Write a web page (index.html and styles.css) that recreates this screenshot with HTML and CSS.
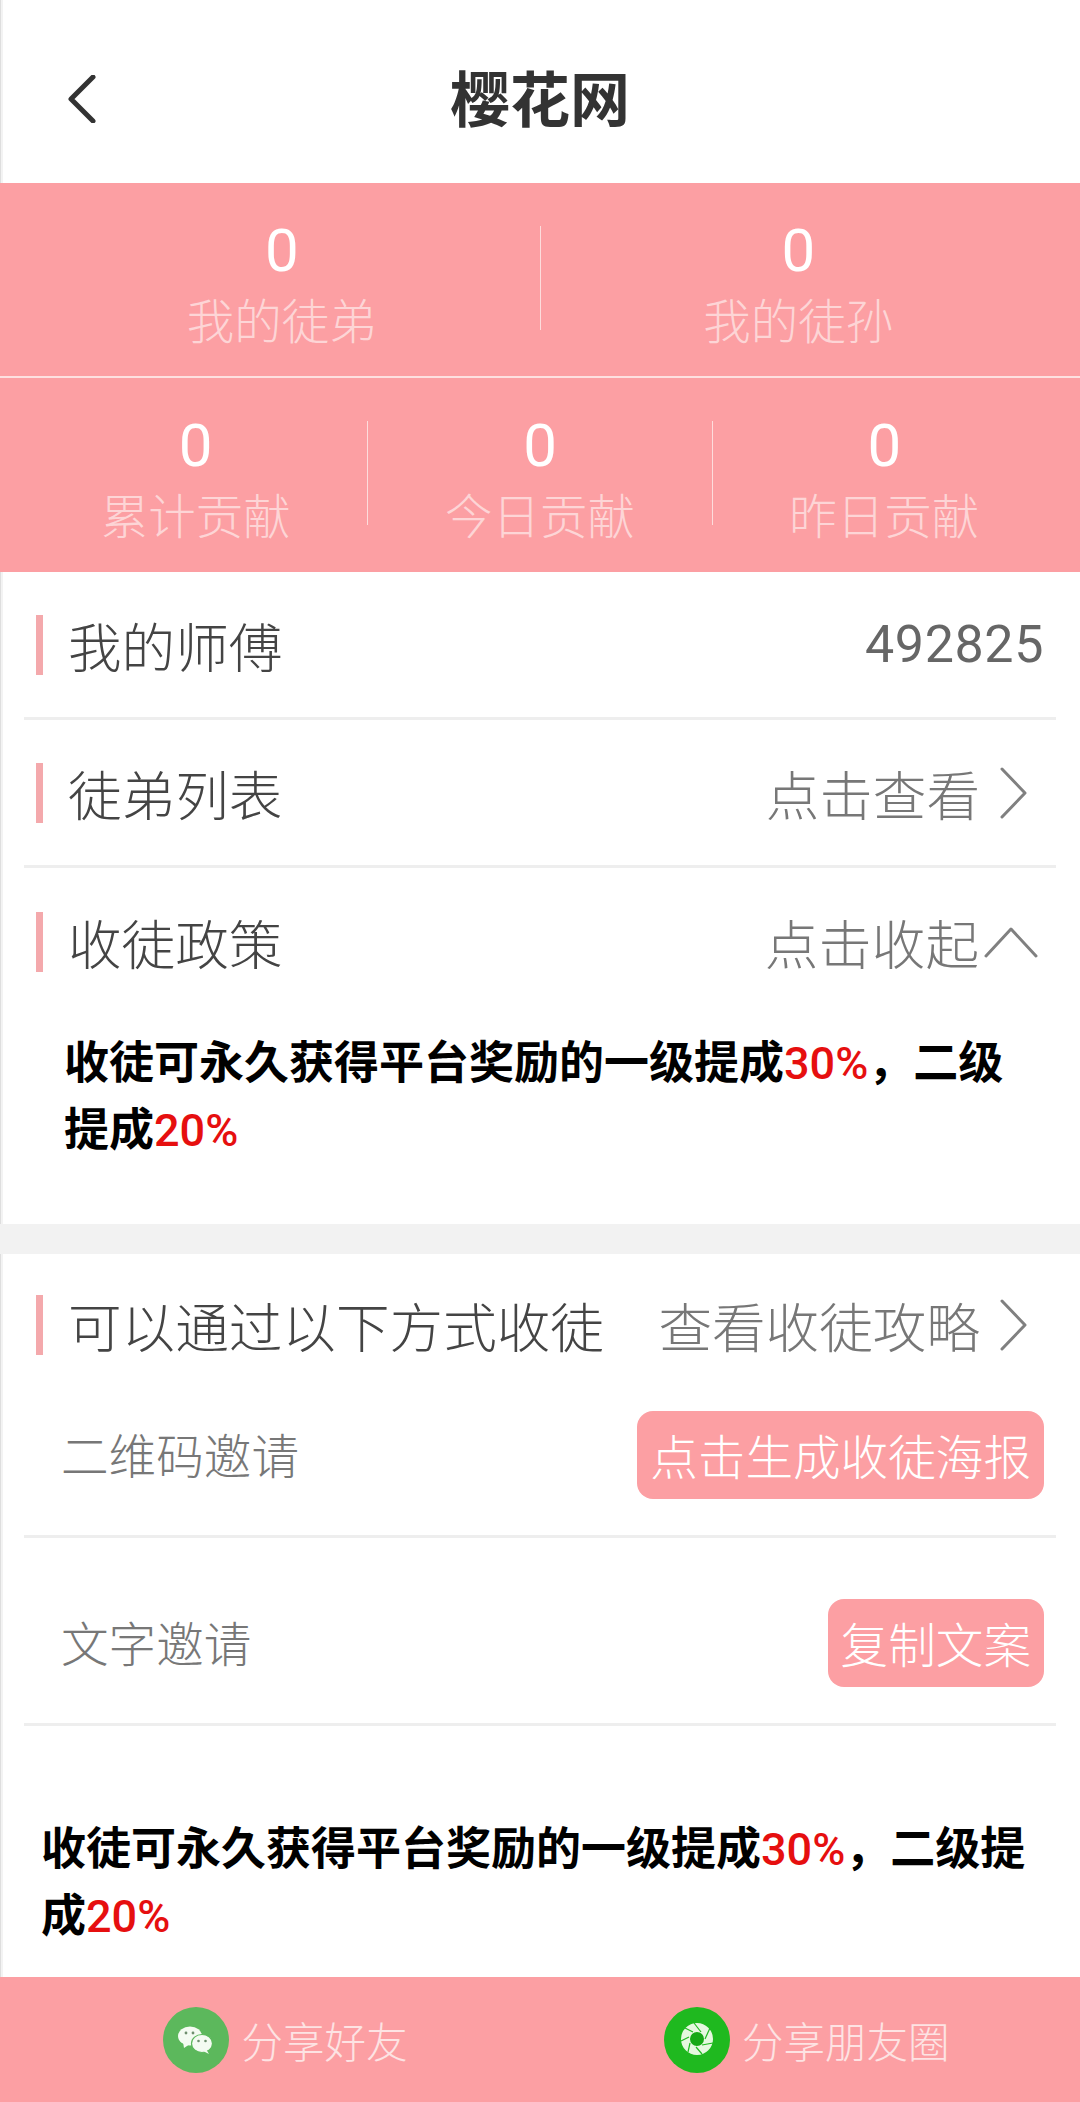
FILE: index.html
```html
<!DOCTYPE html>
<html lang="zh-CN">
<head>
<meta charset="utf-8">
<title>樱花网</title>
<link rel="stylesheet" href="styles.css">
</head>
<body>
<div class="page">
  <header class="topbar">
    <svg class="back" width="28" height="48" viewBox="0 0 28 48"><path d="M25 2 L3 24 L25 46"/></svg>
    <h1 class="title">樱花网</h1>
  </header>

  <section class="stats">
    <div class="stat-row stat-row-first">
      <div class="stat"><div class="stat-num">0</div><div class="stat-label">我的徒弟</div></div>
      <div class="stat-div"></div>
      <div class="stat"><div class="stat-num">0</div><div class="stat-label">我的徒孙</div></div>
    </div>
    <div class="stat-row stat-row-second">
      <div class="stat"><div class="stat-num">0</div><div class="stat-label">累计贡献</div></div>
      <div class="stat-div"></div>
      <div class="stat"><div class="stat-num">0</div><div class="stat-label">今日贡献</div></div>
      <div class="stat-div"></div>
      <div class="stat"><div class="stat-num">0</div><div class="stat-label">昨日贡献</div></div>
    </div>
  </section>

  <section class="panel">
    <div class="row row-line">
      <div class="row-title">我的师傅</div>
      <div class="row-value">492825</div>
    </div>
    <div class="row row-line">
      <div class="row-title">徒弟列表</div>
      <div class="row-link">点击查看<svg class="chev" width="27" height="52" viewBox="0 0 27 52"><path d="M2 2 L25 26 L2 50"/></svg></div>
    </div>
    <div class="row">
      <div class="row-title">收徒政策</div>
      <div class="row-link">点击收起<svg class="chev-up" width="54" height="32" viewBox="0 0 54 32"><path d="M2 30 L27 3 L52 30"/></svg></div>
    </div>
    <p class="policy policy-a">收徒可永久获得平台奖励的一级提成<em>30%</em>，二级提成<em>20%</em></p>
  </section>

  <div class="band"></div>

  <section class="panel">
    <div class="row row-how">
      <div class="row-title">可以通过以下方式收徒</div>
      <div class="row-link">查看收徒攻略<svg class="chev" width="27" height="52" viewBox="0 0 27 52"><path d="M2 2 L25 26 L2 50"/></svg></div>
    </div>
    <div class="invite">
      <div class="invite-name">二维码邀请</div>
      <div class="btn">点击生成收徒海报</div>
    </div>
    <div class="invite">
      <div class="invite-name">文字邀请</div>
      <div class="btn">复制文案</div>
    </div>
    <p class="policy policy-b">收徒可永久获得平台奖励的一级提成<em>30%</em>，二级提成<em>20%</em></p>
  </section>

  <footer class="share">
    <div class="share-item share-friend">
      <svg class="share-icon" width="66" height="66" viewBox="0 0 66 66">
        <circle cx="33" cy="33" r="33" fill="#5cb85c"/>
        <ellipse cx="27" cy="29" rx="12" ry="9.500" fill="#f4fbf2"/>
        <path d="M20 35 L21 41 L27 37 Z" fill="#f4fbf2"/>
        <ellipse cx="39" cy="36.500" rx="10.500" ry="9" fill="#f4fbf2" stroke="#5cb85c" stroke-width="1.200"/>
        <path d="M43 42 L46 47 L38 43 Z" fill="#f4fbf2"/>
        <circle cx="23" cy="26" r="1.400" fill="#6f8f6f"/><circle cx="30" cy="26" r="1.400" fill="#6f8f6f"/>
        <circle cx="35.500" cy="34" r="1.300" fill="#6f8f6f"/><circle cx="42.500" cy="34" r="1.300" fill="#6f8f6f"/>
      </svg>
      <span class="share-text">分享好友</span>
    </div>
    <div class="share-item share-moments">
      <svg class="share-icon" width="66" height="66" viewBox="0 0 66 66">
        <circle cx="33" cy="33" r="33" fill="#1fb91f"/>
        <circle cx="33" cy="32" r="11.500" fill="#17a817" stroke="#e6f8e0" stroke-width="9"/>
        <g stroke="#1fb91f" stroke-width="1.200" fill="none">
          <path d="M30 16 L37 25"/><path d="M46 21 L41 32"/><path d="M49 36 L38 38"/><path d="M38 47 L32 40"/><path d="M24 45 L26 36"/><path d="M17 34 L25 30"/><path d="M21 21 L29 25"/>
        </g>
      </svg>
      <span class="share-text">分享朋友圈</span>
    </div>
  </footer>
</div>
</body>
</html>
```

FILE: styles.css
```css
* { box-sizing: border-box; }
html, body { margin: 0; padding: 0; background: #fff; }
body { font-family: "Noto Sans CJK SC", "Noto Sans", sans-serif; }
.page {
  width: 1080px;
  height: 2102px;
  display: flex;
  flex-direction: column;
  box-shadow: inset 1px 0 0 #dedede, inset 3px 0 0 #f3f3f3;
  overflow: hidden;
}
.page > * { flex: none; }
.topbar {
  height: 183px;
  display: flex;
  align-items: center;
  justify-content: center;
  position: relative;
}
.back { position: absolute; left: 68px; top: 75px; }
.back path, .chev path, .chev-up path { fill: none; stroke-linecap: round; stroke-linejoin: round; }
.back path { stroke: #333; stroke-width: 5; }
.title { margin: 8px 0 0; font-size: 60px; font-weight: 700; color: #333; line-height: 70px; }

.stats { background: #fc9fa3; color: #fff; }
.stat-row { display: flex; padding: 34px 24px 0; align-items: flex-start; }
.stat-row-first { height: 195px; border-bottom: 2px solid #fde0e0; }
.stat-row-second { height: 194px; }
.stat { flex: 1; text-align: center; }
.stat-num { font-family: Roboto, "Noto Sans", sans-serif; font-weight: 400; font-size: 60px; line-height: 68px; }
.stat-label { font-size: 47.5px; line-height: 68px; font-weight: 300; color: #fdd5d6; }
.stat-div { width: 1px; height: 104px; margin-top: 9px; background: #fddcdc; }

.row {
  height: 148px;
  margin: 0 24px 0 12px;
  padding: 0 12px 0 24px;
  display: flex;
  align-items: center;
  justify-content: space-between;
}
.row-line { border-bottom: 3px solid #eeeeee; margin-left: 24px; padding-left: 12px; }
.row-title {
  padding-left: 25px;
  border-left: 7px solid #f4a9ac;
  height: 60px;
  line-height: 60px;
  font-size: 53.6px;
  color: #444;
  font-weight: 300;
}
.row-value { font-family: Roboto, sans-serif; font-size: 52px; color: #666; letter-spacing: 0.6px; }
.row-link { display: flex; align-items: center; font-size: 53.6px; color: #777; font-weight: 300; line-height: 60px; }
.chev { margin-left: 20px; margin-right: 17px; }
.chev path, .chev-up path { stroke: #808080; stroke-width: 3; }
.chev-up { margin-left: 5px; margin-right: 6px; }

.policy { margin: 0; font-weight: 700; font-size: 45px; color: #000; line-height: 67px; }
.policy em { font-style: normal; color: #e60f0f; font-family: Roboto, sans-serif; font-weight: 500; line-height: 1; }
.policy-a { padding: 10px 56px 0 64px; height: 208px; }
.band { height: 30px; background: #f2f2f2; }

.row-how { height: 96px; padding-top: 41px; align-items: flex-start; }
.invite {
  height: 188px;
  margin: 0 24px;
  padding: 61px 12px 0 37px;
  display: flex;
  align-items: flex-start;
  justify-content: space-between;
  border-bottom: 3px solid #eeeeee;
}
.invite-name { font-size: 47.6px; line-height: 86px; color: #777; font-weight: 300; }
.btn { height: 88px; line-height: 88px; padding: 0 13px; font-size: 47.6px; color: #fff; background: #fc9fa3; border-radius: 16px; font-weight: 300; }
.policy-b { padding: 86px 38px 0 41px; }

.share {
  margin-top: auto;
  height: 125px;
  background: #fc9fa3;
  display: flex;
  align-items: center;
}
.share-item { display: flex; align-items: center; }
.share-friend { margin-left: 163px; }
.share-moments { margin-left: 256px; }
.share-text { margin-left: 12.5px; font-size: 41.5px; color: #fde3e3; font-weight: 300; }
.share-icon { flex: none; }
```
